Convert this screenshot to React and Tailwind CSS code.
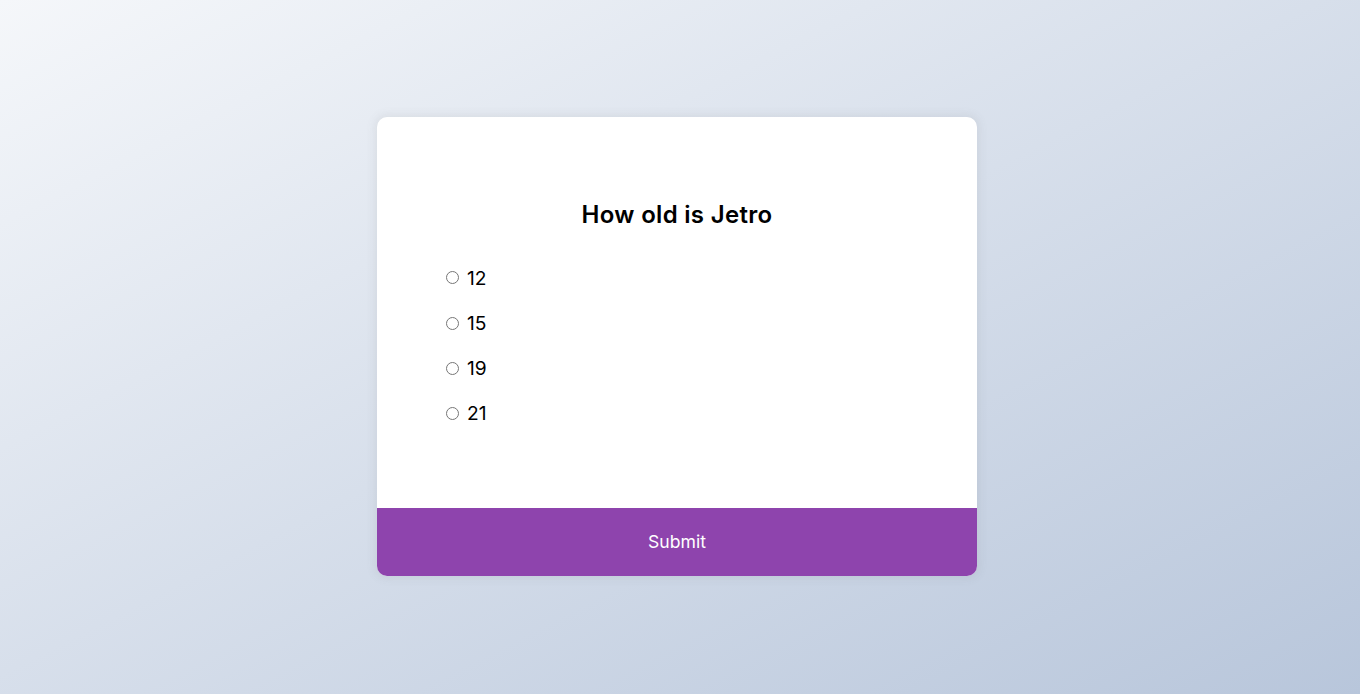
import { useState } from 'react'

const QUIZ = {
  question: 'How old is Jetro',
  answers: ['12', '15', '19', '21'],
}

export default function App() {
  const [picked, setPicked] = useState(null)

  return (
    <div className="min-h-screen flex items-center justify-center pr-[6px] pb-[1px] bg-linear-to-br from-[#f5f7fa] to-[#b8c6db] font-['Inter','Noto_Sans',sans-serif] text-black">
      <div className="w-[600px] bg-white rounded-[10px] overflow-hidden shadow-[0_0_10px_2px_rgba(100,100,100,0.1)]">
        <div className="p-16">
          <h2 className="p-4 text-center text-[24px] leading-[36px] font-semibold tracking-[0.3px]">{QUIZ.question}</h2>
          <ul className="mt-[14.6px] mb-[16.4px] flex flex-col gap-[16.3px]">
            {QUIZ.answers.map((a, i) => (
              <li key={a} className="flex items-center text-[19.2px] leading-[28.8px]">
                <input
                  type="radio"
                  name="answer"
                  id={`a${i}`}
                  checked={picked === i}
                  onChange={() => setPicked(i)}
                  className="ml-[5px] mr-[8px] w-[13px] h-[13px] cursor-pointer"
                />
                <label htmlFor={`a${i}`} className="cursor-pointer">{a}</label>
              </li>
            ))}
          </ul>
        </div>
        <button className="block w-full h-[68px] bg-[#8e44ad] text-white text-[17.6px] leading-[26.4px] cursor-pointer">Submit</button>
      </div>
    </div>
  )
}
